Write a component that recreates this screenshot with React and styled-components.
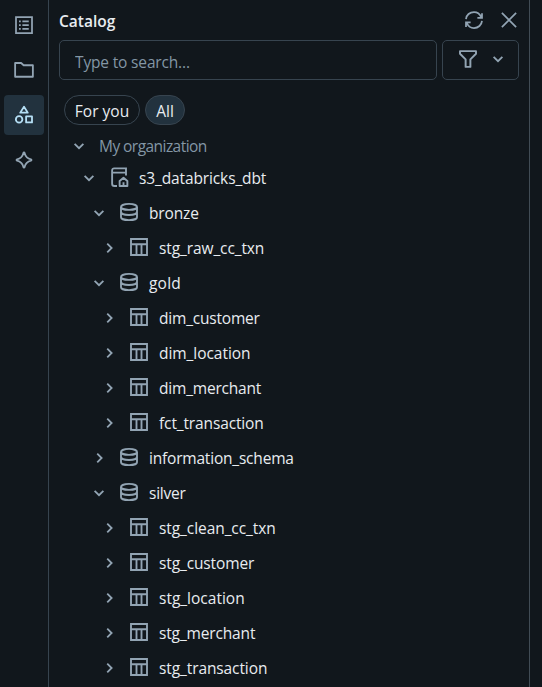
import React from 'react';
import styled, { createGlobalStyle, css } from 'styled-components';

const GlobalStyle = createGlobalStyle`
  * { box-sizing: border-box; }
  html, body { margin: 0; background: #11171c; }
  body { font-family: "Open Sans", "Noto Sans", sans-serif; font-size: 15.5px; color: #e8ecf0; overflow: hidden; }
  button { font: inherit; color: inherit; margin: 0; padding: 0; background: none; border: 0; }
`;

const Shell = styled.div`
  display: grid;
  grid-template-columns: 49px 481px 1fr;
  width: 542px;
  height: 687px;
  overflow: hidden;
`;

const Rail = styled.nav`
  display: flex;
  flex-direction: column;
  gap: 5px;
  padding: 5px 4px;
  border-right: 1px solid #37444f;
`;

const RailButton = styled.button`
  display: flex;
  align-items: center;
  justify-content: center;
  width: 40px;
  height: 40px;
  border-radius: 4px;
  color: ${(p) => (p.$active ? '#b5dff5' : '#92a4b3')};
  background: ${(p) => (p.$active ? '#22323e' : 'transparent')};
`;

const Panel = styled.main`
  display: flex;
  flex-direction: column;
  border-right: 1px solid #414c55;
  padding: 0 10px;
  min-width: 0;
`;

const Header = styled.header`
  display: flex;
  align-items: center;
  height: 40px;
  color: #92a4b3;
`;

const Title = styled.h1`
  flex: 1;
  margin: 2px 0 0;
  font-size: 15.5px;
  line-height: 20px;
  font-weight: 600;
  color: #e8ecf0;
`;

const IconButton = styled.button`
  display: flex;
  align-items: center;
  justify-content: center;
  width: 20px;
  height: 20px;
  margin-left: ${(p) => p.$gap || 0}px;
`;

const SearchRow = styled.div`
  display: grid;
  grid-template-columns: 378px 77px;
  column-gap: 5px;
  height: 40px;
`;

const outline = css`
  border: 1px solid #37444f;
  border-radius: 5px;
`;

const SearchInput = styled.input`
  ${outline}
  width: 100%;
  padding: 3px 15px 0;
  background: transparent;
  font: inherit;
  letter-spacing: -0.16px;
  color: #e8ecf0;
  outline: none;
  &::placeholder { color: #8396a5; opacity: 1; }
`;

const FilterButton = styled.button`
  ${outline}
  display: flex;
  align-items: center;
  padding: 0 0 2px 15px;
  gap: 10px;
  color: #92a4b3;
`;

const Chips = styled.div`
  display: flex;
  gap: 5px;
  padding: 15px 5px 0;
`;

const Chip = styled.button`
  width: ${(p) => p.$width}px;
  height: 30px;
  border-radius: 15px;
  padding-top: 2px;
  border: 1px solid #37444f;
  background: ${(p) => (p.$active ? '#22323e' : 'transparent')};
  line-height: 26px;
`;

const Tree = styled.ul`
  list-style: none;
  margin: 6px 0 0;
  padding: 0;
`;

const TreeRow = styled.li`
  display: flex;
  align-items: center;
  height: ${(p) => (p.$group ? 29 : 35)}px;
  padding-left: ${(p) => 10 + p.$level * 10}px;
  color: #92a4b3;
`;

const NodeIcon = styled.span`
  display: flex;
  margin: 0 10px 2px 10px;
`;

const Label = styled.span`
  margin-left: ${(p) => (p.$group ? 10 : 0)}px;
  padding-top: 1px;
  white-space: pre;
  line-height: 22px;
  letter-spacing: ${(p) => p.$spacing}px;
  color: ${(p) => (p.$group ? '#8396a5' : '#e8ecf0')};
`;

function Icon({ size = 20, children, width = 1.45 }) {
  return (
    <svg width={size} height={size} viewBox="0 0 16 16" fill="none" stroke="currentColor" strokeWidth={width} aria-hidden="true">
      {children}
    </svg>
  );
}

const Chevron = ({ open = true }) => (
  <Icon><path d={open ? 'M4.5 6.3 8 9.8l3.5-3.5' : 'M6.6 4.5 10.1 8l-3.5 3.5'} /></Icon>
);

const TableIcon = () => (
  <Icon width={1.5}>
    <path d="M1.6 1.6h12.8v12.8H1.6zM1.6 5.8h12.8M6 5.8v8.6M10 5.8v8.6" />
  </Icon>
);

const SchemaIcon = () => (
  <Icon width={1.5}>
    <ellipse cx="8" cy="3.9" rx="6.4" ry="2.4" />
    <path d="M1.6 3.9v8.2c0 1.3 2.8 2.4 6.4 2.4s6.4-1.1 6.4-2.4V3.9M1.6 8c0 1.3 2.8 2.4 6.4 2.4s6.4-1.1 6.4-2.4" />
  </Icon>
);

const CatalogIcon = () => (
  <Icon width={1.5}>
    <path d="M6.4 15.2H4.3A1.8 1.8 0 0 1 2.5 13.4V2.7A1.6 1.6 0 0 1 4.1 1.1h9.5v5.6M2.5 4.5h11.1" />
    <path d="M8.5 15.2v-4l3.1-2.6 3.1 2.6v4zM11.6 15v-2.8" strokeLinejoin="round" />
  </Icon>
);

const ListIcon = () => (
  <Icon width={1.4}>
    <path d="M1.6 1.6h12.8v12.8H1.6zM6.7 5h5.1M6.7 8h5.1M6.7 11h5.1M4 5h1.4M4 8h1.4M4 11h1.4" />
  </Icon>
);

const FolderIcon = () => (
  <Icon><path d="M.9 2.4h4.8l2 1.8h7.4v9.2H.9z" strokeLinejoin="round" /></Icon>
);

const ShapesIcon = () => (
  <Icon>
    <path d="M8 1.4 11 6.1H5zM9.7 9.1h4.7v4.8H9.7z" strokeLinejoin="round" />
    <circle cx="4.1" cy="11.5" r="2.6" />
  </Icon>
);

const SparkleIcon = () => (
  <Icon width={1.5}>
    <path d="M8 2C8.3 2 8.4 2.2 8.5 2.5 9.2 5.3 10.5 6.8 13.5 7.5 14.1 7.7 14.1 8.3 13.5 8.5 10.5 9.2 9.2 10.6 8.5 13.5 8.3 14.1 7.7 14.1 7.5 13.5 6.8 10.6 5.5 9.2 2.5 8.5 1.9 8.3 1.9 7.7 2.5 7.5 5.5 6.8 6.8 5.3 7.5 2.5 7.6 2.2 7.7 2 8 2z" />
  </Icon>
);

const RefreshIcon = () => (
  <Icon width={1.4}>
    <path d="M1.6 7.3C1.9 4 4.6 1.6 8 1.6c2.7 0 4.6 1.4 5.7 3.8M14.4 8.7c-.3 3.3-3 5.7-6.4 5.7-2.7 0-4.6-1.4-5.7-3.8M14.4 2.5v3.7h-3.7M1.6 13.5V9.8h3.7" />
    <path d="M14.4 3.6v2.6h-2.6zM1.6 12.4V9.8h2.6z" fill="currentColor" stroke="none" />
  </Icon>
);

const CloseIcon = () => <Icon width={1.35}><path d="m2.3 2.3 11.4 11.4M13.7 2.3 2.3 13.7" /></Icon>;

const FunnelIcon = () => (
  <Icon width={1.55}><path d="M1.6 1.7h12.8v2.1L9.9 8.3v6H6.1v-6L1.6 3.8z" strokeLinejoin="round" /></Icon>
);

const icons = { catalog: CatalogIcon, schema: SchemaIcon, table: TableIcon };

const nodes = [
  { label: 's3_databricks_dbt', level: 1, kind: 'catalog', open: true, spacing: -0.12 },
  { label: 'bronze', level: 2, kind: 'schema', open: true, spacing: -0.15 },
  { label: 'stg_raw_cc_txn', level: 3, kind: 'table', spacing: -0.1 },
  { label: 'gold', level: 2, kind: 'schema', open: true, spacing: 0.2 },
  { label: 'dim_customer', level: 3, kind: 'table', spacing: -0.2 },
  { label: 'dim_location', level: 3, kind: 'table', spacing: -0.05 },
  { label: 'dim_merchant', level: 3, kind: 'table', spacing: -0.2 },
  { label: 'fct_transaction', level: 3, kind: 'table', spacing: -0.13 },
  { label: 'information_schema', level: 2, kind: 'schema', spacing: -0.2 },
  { label: 'silver', level: 2, kind: 'schema', open: true, spacing: -0.25 },
  { label: 'stg_clean_cc_txn', level: 3, kind: 'table', spacing: -0.07 },
  { label: 'stg_customer', level: 3, kind: 'table', spacing: -0.12 },
  { label: 'stg_location', level: 3, kind: 'table', spacing: 0 },
  { label: 'stg_merchant', level: 3, kind: 'table', spacing: -0.15 },
  { label: 'stg_transaction', level: 3, kind: 'table', spacing: -0.1 },
];

export default function App() {
  return (
    <>
      <GlobalStyle />
      <Shell>
        <Rail>
          <RailButton><ListIcon /></RailButton>
          <RailButton><FolderIcon /></RailButton>
          <RailButton $active><ShapesIcon /></RailButton>
          <RailButton><SparkleIcon /></RailButton>
        </Rail>
        <Panel>
          <Header>
            <Title>Catalog</Title>
            <IconButton><RefreshIcon /></IconButton>
            <IconButton $gap={15}><CloseIcon /></IconButton>
          </Header>
          <SearchRow>
            <SearchInput placeholder="Type to search..." />
            <FilterButton><FunnelIcon /><Chevron /></FilterButton>
          </SearchRow>
          <Chips>
            <Chip $width={76}>For you</Chip>
            <Chip $width={40} $active>All</Chip>
          </Chips>
          <Tree>
            <TreeRow $level={0} $group><Chevron /><Label $group $spacing={-0.55}>My organization</Label></TreeRow>
            {nodes.map((n) => {
              const Kind = icons[n.kind];
              return (
                <TreeRow key={n.label} $level={n.level}>
                  <Chevron open={!!n.open} />
                  <NodeIcon><Kind /></NodeIcon>
                  <Label $spacing={n.spacing}>{n.label}</Label>
                </TreeRow>
              );
            })}
          </Tree>
        </Panel>
      </Shell>
    </>
  );
}
